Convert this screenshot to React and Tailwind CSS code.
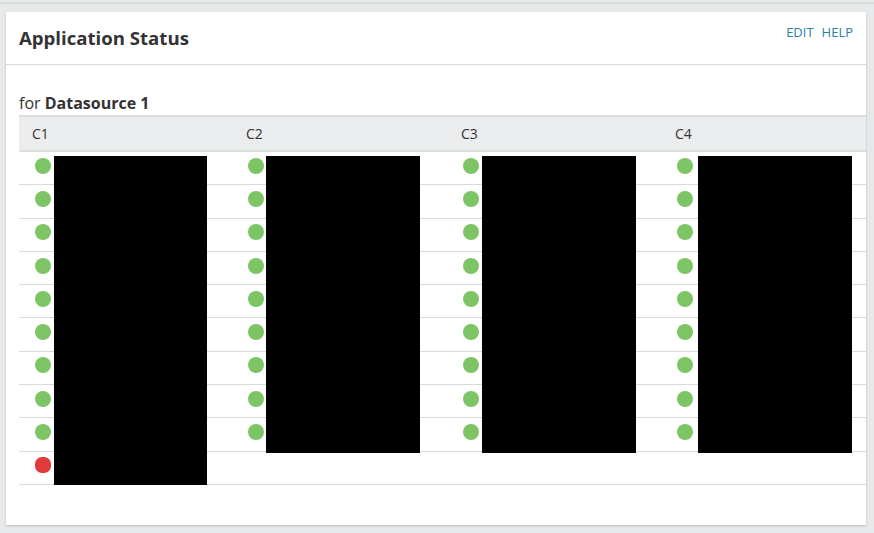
const COLS = [
  { name: "C1", count: 10, dot: "pl-[16px]", box: "w-[153px]", boxH: "h-[329px]", boxL: "left-[35px]" },
  { name: "C2", count: 9, dot: "pl-[15px]", box: "w-[154px]", boxH: "h-[297px]", boxL: "left-[33px]" },
  { name: "C3", count: 9, dot: "pl-[15px]", box: "w-[154px]", boxH: "h-[297px]", boxL: "left-[34px]" },
  { name: "C4", count: 9, dot: "pl-[15px]", box: "w-[154px]", boxH: "h-[297px]", boxL: "left-[36px]" },
];
const ROWS = Array.from({ length: 10 }, (_, i) => i);

export default function App() {
  return (
    <div className="w-[874px] h-[533px] overflow-hidden bg-[#e7e8e9] pt-[2px] pl-[6px] font-['Open_Sans',sans-serif] text-[#333]">
      <div className="border-t-[2px] border-[#dcdddd] h-[10px] -ml-[6px]"></div>
      <div className="w-[860px] h-[513px] bg-white shadow-[0_1px_2px_rgba(0,0,0,0.2)]">
        <div className="h-[53px] border-b border-[#d8d9d9] px-[13px] flex justify-between">
          <h1 className="text-[18.6px] leading-[24px] font-bold mt-[14px] text-[#333]">Application Status</h1>
          <div className="flex gap-[8px] text-[13px] leading-[16px] mt-[12px] text-[#2b83a8]">
            <span>EDIT</span>
            <span>HELP</span>
          </div>
        </div>
        <div className="pl-[13px] pt-[28px]">
          <div className="text-[16px] leading-[21px] h-[22px]">
            for <span className="font-bold">Datasource 1</span>
          </div>
          <div className="grid grid-cols-[214px_215px_214px_204px] h-[37px] bg-[#ebeced] border-y-2 border-[#dcdddd] items-center text-[14px]">
            {COLS.map((c) => (
              <div key={c.name} className="pl-[13px]">{c.name}</div>
            ))}
          </div>
          <div className="relative">
            {ROWS.map((r) => (
              <div key={r} className="h-[33.3px] border-b border-[#d9dada]"></div>
            ))}
            <div className="absolute inset-0 grid grid-cols-[214px_215px_214px_204px]">
              {COLS.map((c) => (
                <div key={c.name} className="relative">
                  <div className="flex flex-col">
                    {ROWS.slice(0, c.count).map((r) => (
                      <div key={r} className={`h-[33.3px] flex items-center pb-[6px] ${c.dot}`}>
                        <span className={c.count === 10 && r === 9 ? "w-[16px] h-[16px] rounded-[7px] bg-[#e03a3c]" : "w-[16px] h-[16px] rounded-full bg-[#7dc464]"}></span>
                      </div>
                    ))}
                  </div>
                  <div className={`absolute top-[4px] bg-black ${c.box} ${c.boxH} ${c.boxL}`}></div>
                </div>
              ))}
            </div>
          </div>
        </div>
      </div>
    </div>
  );
}
